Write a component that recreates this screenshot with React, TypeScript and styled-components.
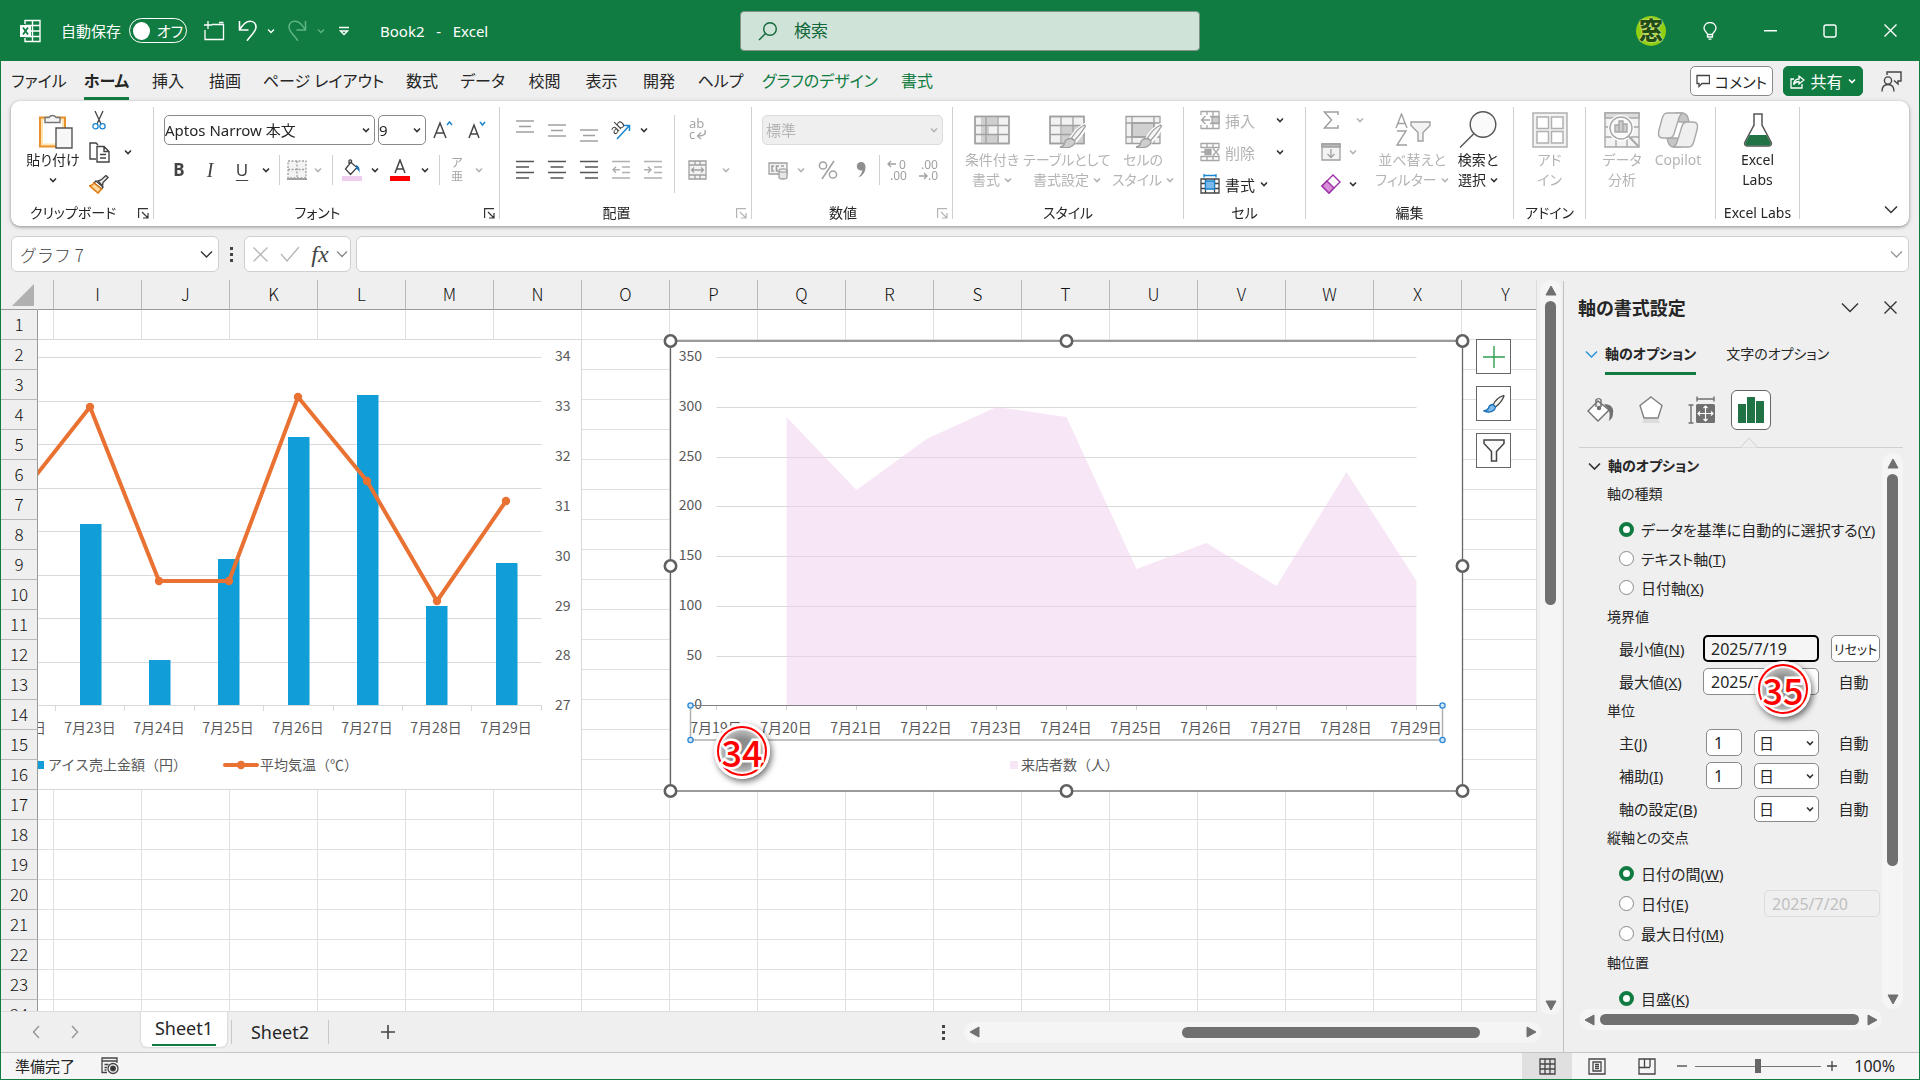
import React from "react";
import styled, { createGlobalStyle, css } from "styled-components";

const GREEN = "#107c41";
const UI = `"Noto Sans", "Noto Sans CJK JP", sans-serif`;
const SHEET = `"Noto Sans CJK JP", "Noto Sans", sans-serif`;
const INK = "#262626";
const DIM = "#b4b4b4";
const LINE = "#8a8a8a";

const GlobalStyle = createGlobalStyle`
  *, *::before, *::after { box-sizing: border-box; }
  body { margin: 0; background: #efefef; color: ${INK}; font-family: ${UI}; font-feature-settings: "palt"; font-size: 15px; }
  button, input, select { font: inherit; color: inherit; font-feature-settings: inherit; margin: 0; }
  button { border: 0; background: none; padding: 0; }
  svg { display: block; flex: none; }
`;

const Window = styled.div`
  display: flex; flex-direction: column; height: 100vh; min-height: 640px; overflow: hidden;
  background: #efefef; border: 1px solid ${GREEN}; border-top: 0;
`;

/* ---------- shared pieces ---------- */

type IcProps = { w: number; h: number; vb?: string; sw?: number; c?: string; children: React.ReactNode };
const Ic = ({ w, h, vb, sw = 1.3, c = "#444", children }: IcProps) => (
  <svg width={w} height={h} viewBox={vb ?? `0 0 ${w} ${h}`} fill="none" stroke={c} strokeWidth={sw} aria-hidden="true">{children}</svg>
);
const Chevron = ({ c = "#333", w = 8, sw = 1.6 }: { c?: string; w?: number; sw?: number }) => (
  <Ic w={w + 2} h={w / 2 + 3} vb={`0 0 ${w + 2} ${w / 2 + 3}`} c={c} sw={sw}><path d={`M1 1.5l${w / 2} ${w / 2} ${w / 2}-${w / 2}`} /></Ic>
);
const Cross = ({ c = "#333", s = 13 }: { c?: string; s?: number }) => (
  <Ic w={s} h={s} c={c} sw={1.4}><path d={`M.5.5L${s - 0.5} ${s - 0.5}M${s - 0.5}.5L.5 ${s - 0.5}`} /></Ic>
);

const ToolButton = styled.button<{ $w?: number; $h?: number }>`
  display: inline-flex; align-items: center; justify-content: center; flex: none;
  width: ${(p) => p.$w ?? 32}px; height: ${(p) => p.$h ?? 30}px;
`;

const PickerWrap = styled.span<{ $w: number; $h: number }>`
  display: inline-grid; align-items: center; width: ${(p) => p.$w}px; height: ${(p) => p.$h}px; flex: none;
  > * { grid-area: 1 / 1; }
  > svg { justify-self: end; margin-right: 5px; pointer-events: none; }
`;
const PickerSelect = styled.select<{ $pad: number }>`
  appearance: none; width: 100%; height: 100%; padding: 0 16px 0 ${(p) => p.$pad}px; font-size: 15px;
  border: 1px solid ${LINE}; border-radius: 5px; background: #fff; opacity: 1;
  &:disabled { background: #efefef; border-color: #dcdcdc; color: ${DIM}; }
`;
const Picker = ({ label, value, w, h, pad = 3, disabled }: { label: string; value: string; w: number; h: number; pad?: number; disabled?: boolean }) => (
  <PickerWrap $w={w} $h={h}>
    <PickerSelect aria-label={label} $pad={pad} disabled={disabled}><option>{value}</option></PickerSelect>
    <Chevron c={disabled ? DIM : "#333"} w={6} />
  </PickerWrap>
);

/* ---------- title bar ---------- */

const TitleBar = styled.header`
  display: grid; grid-template-columns: 1fr 460px 1fr; align-items: center; flex: none; height: 61px;
  margin: 0 -1px; padding-left: 20px; background: ${GREEN}; color: #fff;
`;
const TitleLeft = styled.div`display: flex; align-items: center;`;
const AutoSave = styled.label`display: flex; align-items: center; gap: 8px; margin-left: 20px; white-space: nowrap;`;
const Toggle = styled.span`
  display: inline-flex; align-items: center; gap: 7px; width: 58px; height: 25px; padding: 0 3px; border: 1px solid #fff; border-radius: 13px;
  input { appearance: none; width: 18px; height: 18px; border-radius: 50%; background: #fff; margin: 0; }
`;
const QuickTools = styled.div`display: flex; align-items: center; margin-left: 10px;`;
const DocName = styled.h1`margin: 0 0 0 17px; font-size: 15px; font-weight: 400; white-space: pre;`;
const SearchBox = styled.label`
  display: flex; align-items: center; gap: 16px; height: 40px; padding: 0 17px; border: 1px solid #7f9488; border-radius: 4px; background: #cfe3d8; color: #12683a;
  input { flex: 1; min-width: 0; border: 0; background: none; outline: 0; padding: 0; font-size: 17px; }
  input::placeholder { color: #12683a; opacity: 1; }
`;
const TitleRight = styled.div`display: flex; align-items: center; justify-content: flex-end;`;
const Avatar = styled.button`
  width: 30px; height: 30px; border-radius: 50%; margin-right: 14px; background: #8fce10; color: #1f4d12;
  font-size: 24px; line-height: 28px; font-weight: 900; text-shadow: 0 0 1px #f4f8c8, 0 0 2px #f4f8c8;
  display: flex; justify-content: center;
`;

const ExcelLogo = () => (
  <Ic w={21} h={24} c="#fff" sw={1.4}>
    <path d="M5 5V1.5h15v21H5V19M5 6.5h15M5 12h15M5 17.5h15M12.5 1.5v21" />
    <path d="M0 6h11v12H0z" fill="#fff" stroke="none" />
    <path d="M3 8.5l5 7M8 8.5l-5 7" stroke={GREEN} strokeWidth={1.8} />
  </Ic>
);

const Title = () => (
  <TitleBar>
    <TitleLeft>
      <ExcelLogo />
      <AutoSave>自動保存<Toggle><input type="checkbox" role="switch" aria-label="自動保存" />オフ</Toggle></AutoSave>
      <QuickTools>
        <ToolButton $w={34} aria-label="新規">
          <Ic w={22} h={20} c="#fff" sw={1.3}><path d="M9 3.5h11.5v15H2V9M5 0v8M1 4h8M16 1.5h4.5" /></Ic>
        </ToolButton>
        <ToolButton $w={34} aria-label="元に戻す"><Ic w={20} h={22} c="#fff" sw={1.6}><path d="M1.5 1v9h9M1.8 9.7C5 4 8 1.2 12 1.2c4 0 6 3 6 6 0 4-4 7-9 13.5" /></Ic></ToolButton>
        <ToolButton $w={12} aria-label="元に戻すの履歴"><Chevron c="#fff" w={6} sw={1.3} /></ToolButton>
        <ToolButton $w={40} aria-label="やり直し"><Ic w={20} h={22} c="#5fb486" sw={1.5}><path d="M18.5 1v9h-9M18.2 9.7C15 4 12 1.2 8 1.2c-4 0-6 3-6 6 0 4 4 7 9 13.5" /></Ic></ToolButton>
        <ToolButton $w={8} aria-label="やり直しの履歴"><Chevron c="#5fb486" w={6} sw={1.3} /></ToolButton>
        <ToolButton $w={38} aria-label="ユーザー設定"><Ic w={10} h={10} c="#fff" sw={1.3}><path d="M0 1.5h10M1.5 5L5 8.5 8.5 5z" /></Ic></ToolButton>
      </QuickTools>
      <DocName>{"Book2   -   Excel"}</DocName>
    </TitleLeft>
    <SearchBox>
      <Ic w={20} h={20} c="#12683a" sw={1.4}><circle cx="12" cy="8" r="6.3" /><path d="M7.5 12.5L1 19" /></Ic>
      <input type="search" placeholder="検索" aria-label="検索" />
    </SearchBox>
    <TitleRight>
      <Avatar aria-label="アカウント">窓</Avatar>
      <ToolButton $w={60} aria-label="ヒント">
        <Ic w={14} h={18} c="#fff" sw={1.3}><path d="M4.500 12.500c0-2-3.500-3-3.500-6.500a6 5.500 0 0 1 12 0c0 3.500-3.500 4.500-3.500 6.500zM4.500 12.500v2.500h5v-2.500M5.500 17.200h3" /></Ic>
      </ToolButton>
      <ToolButton $w={60} aria-label="最小化"><Ic w={13} h={2} c="#fff" sw={2}><path d="M0 .5h13" /></Ic></ToolButton>
      <ToolButton $w={60} aria-label="最大化"><Ic w={14} h={14} c="#fff" sw={1.4}><rect x="1" y="1" width="12" height="12" rx="2" /></Ic></ToolButton>
      <ToolButton $w={60} aria-label="閉じる"><Cross c="#fff" /></ToolButton>
    </TitleRight>
  </TitleBar>
);

/* ---------- ribbon tabs ---------- */

const TabBar = styled.nav`display: flex; align-items: center; flex: none; height: 40px; padding: 0 10px 0 4px;`;
const RibbonTab = styled.button<{ $w: number; $on?: boolean; $ctx?: boolean }>`
  width: ${(p) => p.$w}px; height: 40px; font-size: 16px; white-space: nowrap; line-height: 36px;
  color: ${(p) => (p.$ctx ? GREEN : INK)}; font-weight: ${(p) => (p.$on ? 700 : 400)};
  span { display: inline-block; height: 37px; border-bottom: ${(p) => (p.$on ? `3px solid ${GREEN}` : "0")}; }
`;
const TabActions = styled.div`display: flex; align-items: center; gap: 10px; margin-left: auto;`;
const ActionButton = styled.button<{ $solid?: boolean }>`
  display: flex; align-items: center; justify-content: center; gap: 5px; height: 30px; width: ${(p) => (p.$solid ? 80 : 83)}px;
  font-size: ${(p) => (p.$solid ? 16 : 15)}px; border-radius: 5px; border: 1px solid ${(p) => (p.$solid ? GREEN : LINE)};
  background: ${(p) => (p.$solid ? GREEN : "#fff")}; color: ${(p) => (p.$solid ? "#fff" : INK)}; white-space: nowrap;
`;
const TABS: [string, number][] = [["ファイル", 68], ["ホーム", 67], ["挿入", 56], ["描画", 58], ["ページ レイアウト", 139], ["数式", 58], ["データ", 63], ["校閲", 61], ["表示", 53], ["開発", 62], ["ヘルプ", 61], ["グラフのデザイン", 138], ["書式", 56]];

const Tabs = () => (
  <TabBar>
    {TABS.map(([t, w], i) => <RibbonTab key={t} $w={w} $on={i === 1} $ctx={i > 10}><span>{t}</span></RibbonTab>)}
    <TabActions>
      <ActionButton><Ic w={14} h={14} sw={1.3}><path d="M1 1.500h12.500v8H6L3 12.500v-3H1z" /></Ic>コメント</ActionButton>
      <ActionButton $solid>
        <Ic w={15} h={15} c="#fff" sw={1.3}><path d="M4 5H1v9h11v-4M3.500 10.500C4 7 6 5 9 5V2l5 4-5 4V7.500c-2.500 0-4 1-5.500 3z" /></Ic>共有<Chevron c="#fff" w={6} />
      </ActionButton>
      <ToolButton $w={36} aria-label="共同作業">
        <Ic w={21} h={21} sw={1.4}><circle cx="7" cy="9.500" r="3.600" /><path d="M1 20.500c0-5 2.500-7 6-7s6 2 6 7M6 4V1h14v9h-3v3l-4-3.500" /></Ic>
      </ToolButton>
    </TabActions>
  </TabBar>
);

/* ---------- ribbon ---------- */

const RibbonPanel = styled.section`
  display: flex; flex: none; height: 125px; margin: 0 10px; padding: 3px 0 7px; overflow: hidden;
  background: #fff; border-radius: 9px; box-shadow: 0 1px 4px rgba(0, 0, 0, .25);
`;
const RibbonShadow = styled.div`flex: none; filter: drop-shadow(0 1px 1px rgba(0, 0, 0, .18));`;
const GroupBox = styled.div<{ $w: number }>`
  display: grid; grid-template-rows: 1fr 12px; grid-template-columns: 1fr 1px; width: ${(p) => p.$w}px; flex: none;
  &::after { content: ""; grid-area: 1 / 2 / 3 / 3; margin-top: 3px; background: #d0d0d0; }
`;
const GroupBody = styled.div<{ $top?: number; $left?: number; $center?: boolean }>`
  display: flex; align-items: flex-start; padding: ${(p) => p.$top ?? 0}px 0 0 ${(p) => p.$left ?? 0}px; min-width: 0;
  justify-content: ${(p) => (p.$center ? "center" : "flex-start")};
`;
const GroupFoot = styled.div`
  display: flex; align-items: center; font-size: 14px; line-height: 12px; white-space: nowrap;
  > span { flex: 1; text-align: center; }
  > button { margin: 0 4px 0 2px; }
`;
const Rows = styled.div`display: flex; flex-direction: column; gap: 10px;`;
const Stack = styled.div`display: flex; flex-direction: column;`;
const Row = styled.div<{ $gap?: number }>`display: flex; align-items: center; gap: ${(p) => p.$gap ?? 0}px;`;
const Sep = styled.span<{ $tall?: boolean }>`width: 1px; height: ${(p) => (p.$tall ? 78 : 30)}px; margin: 0 5px; background: #d0d0d0; flex: none;`;
const BigButton = styled.button<{ $w: number; $dim?: boolean }>`
  display: flex; flex-direction: column; align-items: center; width: ${(p) => p.$w}px; padding-top: 7px; flex: none;
  font-size: 14px; line-height: 20px; white-space: nowrap; color: ${(p) => (p.$dim ? DIM : INK)};
  > i { display: flex; align-items: center; justify-content: center; height: 38px; margin-bottom: 1px; }
  > span { display: flex; align-items: center; gap: 4px; height: 20px; }
`;
const CellButton = styled.button<{ $dim?: boolean; $gap: number }>`
  display: flex; align-items: center; height: 32px; gap: 5px; font-size: 15px; color: ${(p) => (p.$dim ? DIM : INK)};
  > svg:last-child { margin-left: ${(p) => p.$gap}px; }
`;
const Glyph = styled.b<{ $kind?: "bold" | "italic" | "under" }>`
  font-size: 17px; line-height: 22px; font-weight: ${(p) => (p.$kind === "bold" ? 700 : 400)}; color: #444;
  ${(p) => p.$kind === "italic" && css`font-family: "Liberation Serif", serif; font-style: italic; font-size: 20px;`}
  ${(p) => p.$kind === "under" && css`text-decoration: underline; text-underline-offset: 4px;`}
`;
const Ruby = styled.span`display: block; font-size: 12px; line-height: 14px; color: #a6a6a6; text-align: center;`;

const Launcher = ({ dim }: { dim?: boolean }) => (
  <ToolButton $w={12} $h={12} aria-label="ダイアログを開く">
    <Ic w={11} h={11} c={dim ? DIM : "#333"} sw={1.2}><path d="M.6 10V.6H10M4 4l6 6M10 5v5H5" /></Ic>
  </ToolButton>
);
const Group = ({ w, label, launcher, children, top, left, center }: { w: number; label?: string; launcher?: "on" | "dim"; children: React.ReactNode; top?: number; left?: number; center?: boolean }) => (
  <GroupBox $w={w}>
    <GroupBody $top={top} $left={left} $center={center}>{children}</GroupBody>
    <GroupFoot><span>{label}</span>{launcher && <Launcher dim={launcher === "dim"} />}</GroupFoot>
  </GroupBox>
);
const Drop = ({ w = 18, h, dim }: { w?: number; h?: number; dim?: boolean }) => <ToolButton $w={w} $h={h} aria-label="その他"><Chevron c={dim ? DIM : "#333"} w={6} /></ToolButton>;
const Lines = ({ kind, v = 0, c = "#555", n = 4 }: { kind: "l" | "c" | "r"; v?: number; c?: string; n?: number }) => {
  const widths = n === 3 ? [18, 12, 18] : [18, 13, 18, 13];
  return (
    <Ic w={18} h={26} c={c} sw={1.5}>
      {widths.map((len, i) => {
        const x = kind === "l" ? 0 : kind === "c" ? (18 - len) / 2 : 18 - len;
        const y = n === 3 ? 7 + v + i * 5.5 : 4.5 + i * 5.5;
        return <path key={i} d={`M${x} ${y}h${len}`} />;
      })}
    </Ic>
  );
};
const Indent = ({ out }: { out?: boolean }) => (
  <Ic w={18} h={22} c="#b0b0b0" sw={1.5}><path d={`M0 2.500h18M10 8h8M10 13.500h8M0 19h18${out ? "M8 10.800H1M4 7.800l-3 3 3 3" : "M0 10.800h7M4 7.800l3 3-3 3"}`} /></Ic>
);
const TableGlyph = ({ children, shade }: { children?: React.ReactNode; shade?: string }) => (
  <Ic w={38} h={36} c="#a0a0a0" sw={1.3}>
    <path d="M2 4.500h34v27H2z" fill="#f2f2f2" />
    {shade && <path d={shade} fill="#cfcfcf" stroke="none" />}
    <path d="M2 4.500h34v27H2zM2 13.500h34M2 22.500h34M13 4.500v27M25 4.500v27" />
    {children}
  </Ic>
);
const BrushOver = () => (
  <>
    <path d="M37 13c-6 3-11 8-14 14l3.500 2.500C31 25 36 18 37.500 14z" fill="#f5f5f5" stroke="#fff" strokeWidth={4} />
    <path d="M36.500 13c-6 3-10 8-13 13l3 2.500C31 24 35 18 37.500 14z" fill="#f5f5f5" />
    <path d="M23 26.500c-4 0-6 2-6.500 5-.5 2-2 3-4.500 3.500 8 2 15-.5 15-6z" fill="#cfcfcf" />
  </>
);
const CellIcon = ({ kind }: { kind: "in" | "del" | "fmt" }) => {
  const c = kind === "fmt" ? "#444" : "#a6a6a6";
  return (
    <Ic w={20} h={20} c={c} sw={1.3}>
      {kind === "fmt" ? (
        <><path d="M1 5h18v14H1zM1 9.500h18M1 14.500h18M5.500 5v14M14.500 5v14" /><path d="M5.500 7h9v8h-9z" fill="#7db9ea" stroke="#1a86d0" /><path d="M4 1.500h12M4 0v3.500M16 0v3.500" stroke="#1a86d0" /></>
      ) : kind === "in" ? (
        <><path d="M1 1.500h18v17H1zM1 6.500h18M1 13.500h18M7 1.500v17M13 1.500v17" /><path d="M0 5h10v10H0z" fill="#fff" stroke="none" /><path d="M12 7h7v6h-7z" fill="#ccc" /><path d="M10 10H2M5.500 6l-4 4 4 4" /></>
      ) : (
        <><path d="M1 1.500h18v4H1zM1 14.500h18v4H1zM7 1.500v4M13 1.500v4M7 14.500v4M13 14.500v4M1 10h4" /><path d="M5 7.500h6v5H5z" fill="#a6a6a6" /><path d="M13 6.500l6 7M19 6.500l-6 7" /></>
      )}
    </Ic>
  );
};

const CollapseCorner = styled.div`display: flex; flex: 1; align-items: flex-end; justify-content: flex-end; padding-right: 2px;`;

const Ribbon = () => (
  <RibbonShadow>
    <RibbonPanel>
      <Group w={143} label="クリップボード" launcher="on" left={12}>
        <BigButton $w={60}>
          <i><Ic w={40} h={38} vb="-5 0 40 38" sw={1.4}>
            <path d="M2 6.500h25v29H2z" fill="#ffe3b0" stroke="#e8912d" strokeWidth={2} /><path d="M5 9.500h19v23H5z" fill="#fff" stroke="none" />
            <path d="M7 11.500v-5h4a4 4 0 0 1 7 0h4v5z" fill="#f5f5f5" stroke="#777" /><path d="M18 17h16v20H18z" fill="#f7f7f7" stroke="#555" />
          </Ic></i>
          <span>貼り付け</span><span><Chevron w={6} /></span>
        </BigButton>
        <Stack>
          <ToolButton $h={32} aria-label="切り取り"><Ic w={14} h={20}><path d="M3 1l6 13M11 1L5 14" /><circle cx="3.500" cy="16.300" r="2.600" stroke="#1a86d0" /><circle cx="10.500" cy="16.300" r="2.600" stroke="#1a86d0" /></Ic></ToolButton>
          <ToolButton $h={32} aria-label="コピー"><Ic w={21} h={21} sw={1.4}><path d="M7 17H1V1h6l2 2M8 4.500h7l5 5v10.500H8zM15 4.500v5h5M11 12.500h6M11 16h6" fill="none" /></Ic></ToolButton>
          <ToolButton $h={32} aria-label="書式のコピー"><Ic w={20} h={19} sw={1.4}><path d="M9 6l3-1 5-4.500 2 2-5 5-.5 3.500z" fill="#eee" /><path d="M7 6l7 6-1.500 2-7.500-6z" fill="#fff" /><path d="M5 8C4 10 2 10.500.8 10.800L9 18l3.500-4z" fill="#ffd9a0" stroke="#e07a10" strokeWidth={1.6} /></Ic></ToolButton>
        </Stack>
        <Stack><ToolButton $w={26} $h={32} as="span" /><Drop w={26} h={32} /></Stack>
      </Group>

      <Group w={346} label="フォント" launcher="on" top={11} left={10}>
        <Rows>
          <Row>
            <Row $gap={3}><Picker label="フォント名" value="Aptos Narrow 本文" w={211} h={30} pad={0} /><Picker label="フォント サイズ" value="9" w={48} h={30} pad={0} /></Row>
            <ToolButton $w={34} aria-label="拡大"><Ic w={20} h={20} sw={1.5}><path d="M1 18L7 3l6 15M3 13h8" /><path d="M14 5l2.500-3L19 5" stroke="#1a86d0" /></Ic></ToolButton>
            <ToolButton $w={34} aria-label="縮小"><Ic w={18} h={20} sw={1.5}><path d="M1 18L6 5l5 13M3 14h6.500" /><path d="M12 2l2.500 3L17 2" stroke="#1a86d0" /></Ic></ToolButton>
          </Row>
          <Row>
            <ToolButton $w={30} aria-label="太字"><Glyph $kind="bold">B</Glyph></ToolButton>
            <ToolButton aria-label="斜体"><Glyph $kind="italic">I</Glyph></ToolButton>
            <ToolButton aria-label="下線"><Glyph $kind="under">U</Glyph></ToolButton>
            <Drop w={16} /><Sep />
            <ToolButton $w={24} aria-label="罫線"><Ic w={20} h={20} c="#a0a0a0"><path d="M1 1h18v17H1z" fill="#f3f3f3" strokeDasharray="2 1.500" /><path d="M10 1v17M1 9.500h18" strokeDasharray="2 1.500" /><path d="M0 19h20" strokeWidth={1.8} /></Ic></ToolButton>
            <Drop dim /><Sep />
            <ToolButton $w={28} aria-label="塗りつぶし"><Ic w={20} h={22}><path d="M9 3L3.500 10l5 5.500L15 8.500 9.500 4V1.500a1.500 1.500 0 0 0-2.500 0V6" /><path d="M14 6c3 1 4 3 3.500 8-1-3-2-4-3.500-4z" fill="#1a6fb5" stroke="none" /><path d="M0 17h20v5H0z" fill="#efcdee" stroke="none" /></Ic></ToolButton>
            <Drop />
            <ToolButton aria-label="文字色"><Ic w={20} h={22} sw={1.5}><path d="M5 14L10 1l5 13M7 10h6.500" /><path d="M0 17h20v5H0z" fill="#f00" stroke="none" /></Ic></ToolButton>
            <Drop /><Sep />
            <ToolButton $w={24} aria-label="ふりがな"><Ruby>ア<br />亜</Ruby></ToolButton>
            <Drop w={20} dim />
          </Row>
        </Rows>
      </Group>

      <Group w={252} label="配置" launcher="dim" top={11} left={9}>
        <Rows>
          <Row>
            <ToolButton aria-label="上揃え"><Lines kind="c" n={3} v={-3} c="#a0a0a0" /></ToolButton>
            <ToolButton aria-label="上下中央揃え"><Lines kind="c" n={3} v={1} c="#a0a0a0" /></ToolButton>
            <ToolButton aria-label="下揃え"><Lines kind="c" n={3} v={6} c="#a0a0a0" /></ToolButton>
            <ToolButton aria-label="方向">
              <Ic w={22} h={22}><text x="1" y="13" transform="rotate(-45 7 10)" fontSize="13" fill="#444" stroke="none">ab</text><path d="M7 20L19 7M14 6.500h5.500V12" stroke="#1a86d0" strokeWidth={1.5} /></Ic>
            </ToolButton>
            <Drop w={14} />
          </Row>
          <Row>
            <ToolButton aria-label="左揃え"><Lines kind="l" /></ToolButton>
            <ToolButton aria-label="中央揃え"><Lines kind="c" /></ToolButton>
            <ToolButton aria-label="右揃え"><Lines kind="r" /></ToolButton>
            <ToolButton aria-label="インデントを減らす"><Indent out /></ToolButton>
            <ToolButton aria-label="インデントを増やす"><Indent /></ToolButton>
          </Row>
        </Rows>
        <Sep $tall />
        <Rows>
          <ToolButton $w={36} aria-label="折り返し"><Ic w={20} h={24} c="#a6a6a6"><text x="1" y="10" fontSize="13" fill="#a6a6a6" stroke="none">ab</text><text x="1" y="21" fontSize="13" fill="#a6a6a6" stroke="none">c</text><path d="M17 12c1.500 4-1 6-7 6M13 14.500L9.500 18l3.500 3" /></Ic></ToolButton>
          <Row><ToolButton $w={34} aria-label="結合"><Ic w={19} h={20} c="#a0a0a0"><path d="M1 1h17v18H1zM1 5h17M1 15h17M7 1v4M12 1v4M7 15v4M12 15v4" fill="#f3f3f3" /><path d="M4 10h11M6 7.500L3.500 10 6 12.500M13 7.500l2.500 2.500L13 12.500" /></Ic></ToolButton><Drop w={24} dim /></Row>
        </Rows>
      </Group>

      <Group w={201} label="数値" launcher="dim" top={11} left={10}>
        <Rows>
          <Picker label="表示形式" value="標準" w={181} h={30} disabled />
          <Row>
            <ToolButton aria-label="通貨"><Ic w={21} h={19} c="#a0a0a0"><path d="M1 2h18v11H1z" fill="#f3f3f3" /><path d="M6 5H4v5h2M11 5H8.500v5H10M13 5h3" strokeWidth={1.6} /><path d="M11 9.500v7c0 2 8 2 8 0v-7" fill="#e6e6e6" /><ellipse cx="15" cy="9.500" rx="4" ry="1.600" fill="#eee" /></Ic></ToolButton>
            <Drop w={14} dim />
            <ToolButton $w={40} aria-label="パーセント"><Ic w={20} h={20} c="#a0a0a0" sw={1.5}><circle cx="5" cy="5.500" r="3.600" /><circle cx="15" cy="14.500" r="3.600" /><path d="M16 1L4 19" /></Ic></ToolButton>
            <ToolButton $w={26} aria-label="桁区切り"><Ic w={10} h={18}><path d="M5 1a4 4 0 1 0 0 8.500c.8 0 1 0 1.300-.2C6 12 4.500 14.500 2 16.500 7 15 9.500 11 9.500 6 9.500 3 8 1 5 1z" fill="#8f8f8f" stroke="none" /></Ic></ToolButton>
            <Sep />
            <ToolButton $w={26} aria-label="小数点以下を増やす"><Ic w={22} h={24} c="#a0a0a0"><path d="M9 6H1M4 3L1 6l3 3" /><text x="12" y="11" fontSize="12" fill="#a0a0a0" stroke="none">0</text><text x="3" y="22" fontSize="12" fill="#a0a0a0" stroke="none">.00</text></Ic></ToolButton>
            <ToolButton $w={36} aria-label="小数点以下を減らす"><Ic w={22} h={24} c="#a0a0a0"><text x="3" y="11" fontSize="12" fill="#a0a0a0" stroke="none">.00</text><path d="M1 18h8M6 15l3 3-3 3" /><text x="10" y="22" fontSize="12" fill="#a0a0a0" stroke="none">.0</text></Ic></ToolButton>
          </Row>
        </Rows>
      </Group>

      <Group w={231} label="スタイル" center>
        <BigButton $w={72} $dim><i><TableGlyph shade="M8 4.500h16v9h-8v9h10v9H8z" /></i><span>条件付き</span><span>書式<Chevron c={DIM} w={6} /></span></BigButton>
        <BigButton $w={78} $dim><i><TableGlyph shade="M14 13.500h22v18H14z"><BrushOver /></TableGlyph></i><span>テーブルとして</span><span>書式設定<Chevron c={DIM} w={6} /></span></BigButton>
        <BigButton $w={74} $dim>
          <i><Ic w={38} h={36} c="#a0a0a0"><path d="M2 4.500h34v27H2z" fill="#f2f2f2" /><path d="M8 11h22v14H8z" fill="#d0d0d0" /><path d="M2 11h34M2 25h34M8 4.500v27M30 4.500v27" /><BrushOver /></Ic></i>
          <span>セルの</span><span>スタイル<Chevron c={DIM} w={6} /></span>
        </BigButton>
      </Group>

      <Group w={122} label="セル" left={16}>
        <Stack>
          <CellButton $dim $gap={16}><CellIcon kind="in" />挿入<Chevron w={6} /></CellButton>
          <CellButton $dim $gap={16}><CellIcon kind="del" />削除<Chevron w={6} /></CellButton>
          <CellButton $gap={0}><CellIcon kind="fmt" />書式<Chevron w={6} /></CellButton>
        </Stack>
      </Group>

      <Group w={208} label="編集" left={9}>
        <Stack>
          <Row><ToolButton $h={32} aria-label="合計"><Ic w={16} h={18} c="#a0a0a0" sw={1.5}><path d="M15 4V1H1.500l7 8-7 8H15v-3" /></Ic></ToolButton><Drop w={26} h={32} dim /></Row>
          <Row><ToolButton $h={32} aria-label="フィル"><Ic w={20} h={18} c="#a0a0a0"><path d="M1 1h18v16H1z" fill="#f3f3f3" /><path d="M1 1h18v3H1z" fill="#bbb" /><path d="M10 6v8.500M6.500 11l3.500 3.500L13.500 11" /></Ic></ToolButton><Drop w={12} h={32} dim /></Row>
          <Row><ToolButton $h={32} aria-label="クリア"><Ic w={20} h={20} c="#9b30a5" sw={1.4}><path d="M12 1l7 7L8 19l-7-7z" fill="#fff" /><path d="M6 7l7 7-5 5-7-7z" fill="#d88fd8" /></Ic></ToolButton><Drop w={12} h={32} /></Row>
        </Stack>
        <BigButton $w={78} $dim>
          <i><Ic w={37} h={34} c="#a0a0a0" sw={1.4}><path d="M2 15L7.500 1 13 15M4 10.500h7M3 18h9L3 32h10" /><path d="M17 9h19v3.500l-7 7V28h-5v-8.500l-7-7z" fill="#f3f3f3" /></Ic></i>
          <span>並べ替えと</span><span>フィルター<Chevron c={DIM} w={6} /></span>
        </BigButton>
        <BigButton $w={54}>
          <i><Ic w={38} h={38} c="#555" sw={1.4}><circle cx="24" cy="13.500" r="12.800" fill="#fafafa" /><path d="M15 22.500L1 36.500" /></Ic></i>
          <span>検索と</span><span>選択<Chevron w={6} /></span>
        </BigButton>
      </Group>

      <Group w={72} label="アドイン" center>
        <BigButton $w={60} $dim>
          <i><Ic w={36} h={36} c="#b0b0b0" sw={1.5}><path d="M1 1h34v34H1z" fill="#f3f3f3" /><path d="M5 5h11.500v11.500H5zM19.500 5H31v11.500H19.500zM5 19.500h11.500V31H5zM19.500 19.500H31V31H19.500z" fill="#fff" /></Ic></i>
          <span>アド</span><span>イン</span>
        </BigButton>
      </Group>

      <Group w={130} left={10}>
        <BigButton $w={52} $dim>
          <i><Ic w={36} h={36} c="#a8a8a8" sw={1.4}><path d="M1 1h34v34H1z" fill="#f3f3f3" /><path d="M1 1h34v5H1z" fill="#ddd" /><path d="M1 15h34M1 25h34M12 25v10M23 25v10" /><circle cx="17" cy="16" r="11" fill="#fafafa" stroke="#fff" strokeWidth={4} /><circle cx="17" cy="16" r="11" fill="#fafafa" /><path d="M24.500 24L35 35" strokeWidth={2} /><path d="M11 13h4v7h-4zM15 9h4v11h-4zM19 12h4v8h-4z" fill="#ccc" /></Ic></i>
          <span>データ</span><span>分析</span>
        </BigButton>
        <BigButton $w={60} $dim>
          <i><Ic w={42} h={38} c="#a8a8a8" sw={1.4}>
            <path d="M24 2c4 0 6 1 7 5l1 4H22l-3-9z" fill="#c6c6c6" /><path d="M17 36c-4 0-5-2-6-5l-1-4h10l4 9z" fill="#c6c6c6" />
            <path d="M10 2h16c-3 1-4 4-5 8l-4 13c-1 3-2 4-5 4H6c-5 0-5-4-4-8l3-11C6 4 7 2 10 2z" fill="#efefef" />
            <path d="M32 36H16c3-1 4-4 5-8l4-13c1-3 2-4 5-4h6c5 0 5 4 4 8l-3 11c-1 4-2 6-5 6z" fill="#efefef" />
          </Ic></i>
          <span>Copilot</span>
        </BigButton>
      </Group>

      <Group w={84} label="Excel Labs" center>
        <BigButton $w={70}>
          <i><Ic w={30} h={34} c="#555" sw={1.5}><path d="M11 1h8v11l9 17c1 2 0 4-2 4H4c-2 0-3-2-2-4l9-17z" fill="#fff" /><path d="M6.500 22h17l4 7.500c.8 1.500 0 3-1.500 3H4c-1.500 0-2.300-1.500-1.500-3z" fill="#217346" stroke="none" /></Ic></i>
          <span>Excel</span><span>Labs</span>
        </BigButton>
      </Group>
      <CollapseCorner><ToolButton $h={20} aria-label="リボンを折りたたむ"><Chevron w={12} sw={1.5} /></ToolButton></CollapseCorner>
    </RibbonPanel>
  </RibbonShadow>
);

/* ---------- formula bar ---------- */

const FormulaBar = styled.div`display: flex; flex: none; height: 54px; padding: 10px 10px 8px; color: #444;`;
const BarBox = styled.div<{ $w?: number }>`
  display: flex; align-items: center; height: 36px; background: #fff; border: 1px solid #cfcfcf; border-radius: 6px;
  ${(p) => (p.$w ? css`width: ${p.$w}px; flex: none;` : css`flex: 1; min-width: 0;`)}
  input { flex: 1; min-width: 0; height: 32px; border: 0; outline: 0; background: none; padding: 0 8px; font-family: ${SHEET}; font-size: 17px; font-weight: 300; font-feature-settings: normal; }
`;
const Dots = styled.span`display: flex; flex-direction: column; align-items: center; justify-content: center; gap: 3px; width: 25px; i { width: 3px; height: 3px; background: #444; }`;
const Fx = styled.em`font-family: "Liberation Serif", serif; font-size: 24px; line-height: 24px;`;
const Spacer = styled.span`width: 5px;`;

const Formula = () => (
  <FormulaBar>
    <BarBox $w={208}><input aria-label="名前ボックス" defaultValue="グラフ 7" /><ToolButton $w={24} aria-label="名前の一覧"><Chevron w={11} sw={1.4} /></ToolButton></BarBox>
    <Dots><i /><i /><i /></Dots>
    <BarBox $w={107}>
      <ToolButton $w={30} aria-label="キャンセル"><Cross c="#b8b8b8" s={15} /></ToolButton>
      <ToolButton $w={30} aria-label="入力"><Ic w={20} h={16} c="#b8b8b8" sw={1.4}><path d="M1 8l6 7L19 1" /></Ic></ToolButton>
      <ToolButton $w={30} aria-label="関数の挿入"><Fx>fx</Fx></ToolButton>
      <ToolButton $w={14} aria-label="関数の一覧"><Chevron c="#888" w={10} sw={1.3} /></ToolButton>
    </BarBox>
    <Spacer />
    <BarBox><input aria-label="数式バー" /><ToolButton $w={24} aria-label="数式バーの展開"><Chevron c="#999" w={11} sw={1.4} /></ToolButton></BarBox>
  </FormulaBar>
);

/* ---------- scroll bars ---------- */

const Track = styled.div<{ $v?: boolean }>`
  display: flex; flex-direction: ${(p) => (p.$v ? "column" : "row")}; align-items: center; background: #f5f5f5; border-radius: 11px; flex: 1; min-height: 0; min-width: 0;
  ${(p) => (p.$v ? css`width: 21px;` : css`height: 21px;`)}
`;
const Thumb = styled.span<{ $v?: boolean; $grow: number }>`
  flex: ${(p) => p.$grow} 1 0; border-radius: 6px; background: #707070; ${(p) => (p.$v ? css`width: 11px;` : css`height: 11px;`)}
`;
const Rest = styled.span<{ $grow: number }>`flex: ${(p) => p.$grow} 1 0;`;
const ARROWS = { up: "M6 1l5 9H1z", down: "M6 11L1 2h10z", left: "M1 6l9-5v10z", right: "M11 6L2 1v10z" };
const Arrow = ({ dir }: { dir: keyof typeof ARROWS }) => (
  <ToolButton $w={21} $h={21} aria-label={dir}><svg width="12" height="12" viewBox="0 0 12 12"><path d={ARROWS[dir]} fill="#707070" stroke="#707070" strokeLinejoin="round" /></svg></ToolButton>
);
const ScrollBar = ({ v, before, thumb, after }: { v?: boolean; before: number; thumb: number; after: number }) => (
  <Track $v={v}><Arrow dir={v ? "up" : "left"} /><Rest $grow={before} /><Thumb $v={v} $grow={thumb} /><Rest $grow={after} /><Arrow dir={v ? "down" : "right"} /></Track>
);

/* ---------- work sheet ---------- */

const Main = styled.main`display: flex; flex: 1; min-height: 0;`;
const SheetArea = styled.section`display: flex; flex-direction: column; flex: 1; min-width: 0;`;
const GridRow = styled.div`display: flex; flex: 1; min-height: 0;`;
const Canvas = styled.div`position: relative; flex: 1; min-width: 0; overflow: hidden; border-bottom: 1px solid #dcdcdc; border-right: 1px solid #dcdcdc; background: #fff;`;
const VScrollCol = styled.div`display: flex; width: 26px; padding: 0 2px 0 3px; margin-bottom: -3px; z-index: 1;`;
const Grid = styled.table`
  table-layout: fixed; border-collapse: separate; border-spacing: 0; width: 1549px; font-family: ${SHEET}; font-size: 17px;
  th, td { padding: 0 0 2px; height: 30px; line-height: 26px; font-weight: 300; color: #111; }
  td { border-right: 1px solid #e0e0e0; border-bottom: 1px solid #e0e0e0; }
  thead th { background: #efefef; border-right: 1px solid #b9b9b9; border-bottom: 1px solid #999; }
  thead th:first-child { border-right-color: #efefef; }
  tbody th { background: #efefef; border-right: 1px solid #999; border-bottom: 1px solid #b9b9b9; }
  thead svg { margin: 2px 0 0 11px; }
`;
const COLS = "IJKLMNOPQRSTUVWXY".split("");
const SheetGrid = () => (
  <Grid>
    <colgroup><col style={{ width: 37 }} /><col style={{ width: 16 }} />{COLS.map((c) => <col key={c} style={{ width: 88 }} />)}</colgroup>
    <thead><tr>
      <th aria-label="すべて選択"><svg width="22" height="22" viewBox="0 0 22 22"><path d="M22 0v22H0z" fill="#b0b0b0" /></svg></th>
      <th />{COLS.map((c) => <th key={c} scope="col">{c}</th>)}
    </tr></thead>
    <tbody>
      {Array.from({ length: 24 }, (_, r) => (
        <tr key={r}><th scope="row">{r + 1}</th><td />{COLS.map((c) => <td key={c} />)}</tr>
      ))}
    </tbody>
  </Grid>
);

const Floating = styled.svg<{ $x: number; $y: number }>`
  position: absolute; left: ${(p) => p.$x}px; top: ${(p) => p.$y}px; font-family: ${SHEET}; font-size: 14px; font-feature-settings: normal;
  text { fill: #595959; }
`;

const BARS = [[80, 524], [149, 660], [218, 559], [288, 437], [357, 395], [426, 606], [496, 563]];
const TEMPS = [[30, 483], [90, 407], [159, 581], [229, 581], [298, 397], [367, 481], [437, 601], [506, 501]];
const ComboChart = () => (
  <Floating $x={37} $y={59} width="544" height="451" viewBox="38 339 544 451" role="img" aria-label="アイス売上金額と平均気温">
    <rect x="30" y="339.500" width="551.500" height="450" fill="#fff" stroke="#d9d9d9" />
    {Array.from({ length: 9 }, (_, i) => <path key={i} d={`M38 ${Math.round(357 + i * 43.5) + 0.5}H541.500`} stroke="#d9d9d9" />)}
    {Array.from({ length: 8 }, (_, i) => <path key={i} d={`M${Math.round(55 + i * 69.4) + 0.5} 705v6`} stroke="#d9d9d9" />)}
    {BARS.map(([x, y]) => <rect key={x} x={x} y={y} width="21.500" height={705 - y} fill="#119dd7" />)}
    <polyline points={TEMPS.map((p) => p.join()).join(" ")} fill="none" stroke="#e97132" strokeWidth="4" strokeLinejoin="round" />
    {TEMPS.map(([x, y]) => <circle key={x} cx={x} cy={y} r="4.200" fill="#e97132" />)}
    {Array.from({ length: 8 }, (_, i) => <text key={i} x="555" y={361 + Math.round(i * 49.9)}>{34 - i}</text>)}
    <text x="46" y="733" textAnchor="end">日</text>
    {BARS.map(([x], i) => <text key={x} x={x + 10} y="733" textAnchor="middle">{`7月${23 + i}日`}</text>)}
    <rect x="38" y="761" width="6" height="8" fill="#119dd7" />
    <text x="48" y="770">アイス売上金額（円）</text>
    <path d="M225 765h32" stroke="#e97132" strokeWidth="4" strokeLinecap="round" /><circle cx="241" cy="765" r="4.200" fill="#e97132" />
    <text x="260" y="770">平均気温（℃）</text>
  </Floating>
);

const VISITORS = [417, 490, 439, 407, 417, 569, 543, 586, 472, 581];
const AREA = `M786.5 705.5L${VISITORS.map((y, i) => `${786.5 + i * 70} ${y}`).join("L")}L1416.5 705.5z`;
const AreaChart = () => (
  <Floating $x={659} $y={50} width="820" height="470" viewBox="660 330 820 470" role="img" aria-label="来店者数">
    <rect x="670.500" y="341" width="792" height="450" fill="#fff" stroke="#666" strokeWidth="1.300" />
    {Array.from({ length: 8 }, (_, i) => <path key={i} d={`M716.500 ${Math.round(357 + i * 49.75) + 0.5}h700`} stroke="#d9d9d9" />)}
    {Array.from({ length: 11 }, (_, i) => <path key={i} d={`M${716.5 + i * 70} 705v5`} stroke="#d0d0d0" />)}
    <path d={AREA} fill="#efcfee" fillOpacity=".5" />
    {Array.from({ length: 8 }, (_, i) => <text key={i} x="702" y={361 + Math.round(i * 49.75)} textAnchor="end">{350 - i * 50}</text>)}
    {Array.from({ length: 11 }, (_, i) => <text key={i} x={716 + i * 70} y="733" textAnchor="middle">{`7月${19 + i}日`}</text>)}
    <path d="M690.500 705.500V740H1442.500V705.500" fill="none" stroke="#b0b0b0" strokeWidth="1.500" /><path d="M690.500 705.500H1442.500" stroke="#808080" />
    {[690.5, 1442.5].map((x) => [705.5, 740].map((y) => <circle key={`${x}-${y}`} cx={x} cy={y} r="2.600" fill="#cfe6f8" stroke="#2b88d8" strokeWidth="1.300" />))}
    <rect x="1010" y="761" width="8" height="8" fill="#f6e6f6" />
    <text x="1021" y="770">来店者数（人）</text>
    {[670.5, 1066.5, 1462.5].map((x) => [341, 566, 791].map((y) => (x === 1066.5 && y === 566 ? null : <circle key={`${x}-${y}`} cx={x} cy={y} r="5.700" fill="#fff" stroke="#606060" strokeWidth="2.600" />)))}
  </Floating>
);

const ChartTools = styled.div`position: absolute; left: 1475px; top: 59px; display: flex; flex-direction: column; gap: 12px;`;
const ChartTool = styled.button`display: flex; align-items: center; justify-content: center; width: 35px; height: 35px; background: #fff; border: 1px solid #666;`;

const Badge = styled.span<{ $x: number; $y: number }>`
  position: absolute; left: ${(p) => p.$x}px; top: ${(p) => p.$y}px; z-index: 2; width: 56px; height: 56px; border-radius: 50%;
  display: flex; align-items: center; justify-content: center; background: radial-gradient(circle, #8c8c8c 0 12px, #b8b8b8 20px, #fff 22px);
  box-shadow: 2px 3px 6px rgba(0, 0, 0, .55); color: #f00; font-family: "Noto Sans CJK JP", sans-serif; font-size: 36px; line-height: 50px; font-weight: 500;
  &::before { content: ""; position: absolute; inset: 3px; border: 2px solid #f00; border-radius: 50%; }
  span { position: relative; -webkit-text-stroke: 5px #fff; paint-order: stroke fill; }
`;

/* ---------- sheet tabs ---------- */

const SheetBar = styled.div`display: flex; align-items: center; flex: none; height: 40px; padding: 0 22px 0 19px; font-size: 18px;`;
const SheetTab = styled.button<{ $on?: boolean }>`
  align-self: flex-start; height: 36px; width: 86px; border-radius: 0 0 6px 6px; line-height: 30px;
  ${(p) => p.$on ? css`background: #fff; margin-top: -1px; margin-left: 43px; box-shadow: 0 0 2px rgba(0, 0, 0, .3);` : css`width: 96px; margin: 2px 0 0 4px; line-height: 36px;`}
  span { display: inline-block; padding: 0 3px; height: 33px; border-bottom: ${(p) => (p.$on ? `2px solid ${GREEN}` : "0")}; }
`;
const Rule = styled.i`width: 1px; height: 24px; background: #c8c8c8;`;
const FirstRule = styled(Rule)`margin-left: 4px; margin-right: -4px;`;
const HScroll = styled.div`display: flex; width: 577px; margin-left: 8px;`;
const PushRight = styled.div`display: flex; margin-left: auto; align-items: center;`;

const SheetTabs = () => (
  <SheetBar>
    <ToolButton aria-label="前のシート"><Ic w={8} h={14} c="#999" sw={1.5}><path d="M7 1L1.500 7 7 13" /></Ic></ToolButton>
    <ToolButton $w={46} aria-label="次のシート"><Ic w={8} h={14} c="#999" sw={1.5}><path d="M1 1l5.500 6L1 13" /></Ic></ToolButton>
    <SheetTab $on><span>Sheet1</span></SheetTab><FirstRule /><SheetTab><span>Sheet2</span></SheetTab><Rule />
    <ToolButton $w={118} aria-label="新しいシート"><Ic w={14} h={14} sw={1.6}><path d="M7 0v14M0 7h14" /></Ic></ToolButton>
    <PushRight><Dots><i /><i /><i /></Dots><HScroll><ScrollBar before={197} thumb={297} after={40} /></HScroll></PushRight>
  </SheetBar>
);

/* ---------- format pane ---------- */

const Pane = styled.aside`display: flex; flex-direction: column; flex: none; width: 356px; position: relative; border-left: 1px solid #c0c0c0; padding-bottom: 22px; margin-top: 1px;`;
const PaneHead = styled.div`display: flex; align-items: center; height: 53px; padding: 0 9px 0 14px; flex: none; h2 { margin: 0 auto 0 0; font-size: 18px; line-height: 24px; }`;
const PaneTabs = styled.div`display: flex; height: 41px; flex: none; padding-left: 14px;`;
const PaneTab = styled.button<{ $on?: boolean }>`
  height: 41px; line-height: 40px; font-size: 14px; white-space: nowrap; font-weight: ${(p) => (p.$on ? 700 : 400)};
  border-bottom: ${(p) => (p.$on ? `3px solid ${GREEN}` : "3px solid transparent")}; margin-right: 30px;
`;
const PaneIcons = styled.div`display: flex; align-items: center; flex: none; height: 40px; margin: 15px 0 17px 12px;`;
const IconTab = styled.button<{ $on?: boolean; $w?: number }>`
  display: flex; align-items: center; justify-content: center; height: 40px; width: ${(p) => p.$w ?? 50}px;
  ${(p) => p.$on && css`background: #fff; border: 1px solid #666; border-radius: 6px; margin-left: 5px;`}
`;
const Notch = styled.div`position: relative; height: 1px; flex: none; margin: 0 16px 0 15px; background: #cfcfcf; svg { position: absolute; left: 161px; top: -10px; }`;
const PaneMid = styled.div`display: flex; flex: 1; min-height: 0; margin: 0 16px 0 15px;`;
const PaneBody = styled.form`flex: 1; min-width: 0; overflow: hidden; padding-top: 3px;`;
const PaneV = styled.div`display: flex; width: 21px; padding-top: 5px; flex: none;`;
const PaneH = styled.div`display: flex; flex: none; height: 21px; margin: 0 37px 0 15px;`;
const SectionHead = styled.button`display: flex; align-items: center; gap: 7px; height: 30px; padding-left: 9px; font-size: 14px; line-height: 28px; font-weight: 700;`;
const SubHead = styled.h3`margin: 0; height: 28px; line-height: 26px; padding-left: 28px; font-size: 14px; font-weight: 400;`;
const Radios = styled.div`padding: 6px 0 2px;`;
const RadioRow = styled.div`display: flex; align-items: center; min-height: 29px; padding-left: 40px; gap: 7px; label { white-space: nowrap; line-height: 20px; } `;
const Radio = styled.input`
  appearance: none; width: 15px; height: 15px; flex: none; border-radius: 50%; border: 1px solid ${LINE}; background: #fff;
  &:checked { border: 4px solid ${GREEN}; }
`;
const FieldRow = styled.div`display: grid; grid-template-columns: 127px 48px 65px 12px 49px; align-items: center; height: 33px; label { padding-left: 40px; white-space: nowrap; }`;
const TextField = styled.input<{ $wide?: boolean; $focus?: boolean }>`
  height: 27px; padding: 0 0 0 7px; min-width: 0; font-size: 16px; border-radius: 5px; background: #fff; border: 1px solid ${LINE};
  ${(p) => p.$wide ? css`grid-column: 2 / 4; margin-left: -3px;` : css`width: 36px;`}
  ${(p) => p.$focus && css`border: 2px solid #000; background: #f5f5f5; padding-left: 6px;`}
`;
const Auto = styled.span`grid-column: 5; text-align: center; padding-right: 4px;`;
const ResetButton = styled.button`grid-column: 5; height: 27px; background: #fff; border: 1px solid ${LINE}; border-radius: 5px; font-size: 13px; white-space: nowrap;`;
const DateField = styled.input`margin: 2px 2px 2px auto; width: 116px; height: 27px; padding: 0 7px; border: 1px solid #dcdcdc; border-radius: 5px; background: none; color: #c0c0c0; font-size: 16px;`;

const Opt = ({ id, name, text, k, on, children }: { id: string; name: string; text: string; k: string; on?: boolean; children?: React.ReactNode }) => (
  <RadioRow><Radio type="radio" id={id} name={name} defaultChecked={on} /><label htmlFor={id}>{text}(<u>{k}</u>)</label>{children}</RadioRow>
);
const UnitRow = ({ id, text, k, num }: { id: string; text: string; k: string; num?: boolean }) => (
  <FieldRow>
    <label htmlFor={id}>{text}(<u>{k}</u>)</label>
    {num ? <TextField id={id} defaultValue="1" /> : <span />}
    <Picker label={`${text}の単位`} value="日" w={65} h={26} pad={4} />
    <Auto>自動</Auto>
  </FieldRow>
);

const FormatPane = () => (
  <Pane>
    <PaneHead><h2>軸の書式設定</h2><ToolButton $w={40} aria-label="作業ウィンドウのオプション"><Chevron w={16} sw={1.4} /></ToolButton><ToolButton $w={40} aria-label="閉じる"><Cross /></ToolButton></PaneHead>
    <PaneTabs>
      <ToolButton $w={27} $h={40} aria-label="要素の選択"><Chevron c="#2b95d8" w={11} sw={1.5} /></ToolButton>
      <PaneTab $on>軸のオプション</PaneTab><PaneTab>文字のオプション</PaneTab>
    </PaneTabs>
    <PaneIcons>
      <IconTab aria-label="塗りつぶしと線"><Ic w={28} h={28} c="#707070" sw={1.4}><path d="M11 5L1 15l10 10 11-11zM9 11V4a3 3 0 0 1 5 0v7" fill="#fff" /><circle cx="12" cy="12" r="1.500" fill="#707070" /><path d="M17 8c7 0 10 4 9 9 0 3-1 6-4 8 1-6 1-8-1-12z" fill="#707070" stroke="none" /></Ic></IconTab>
      <IconTab aria-label="効果"><Ic w={24} h={28} c="#808080" sw={1.4}><path d="M12 1l11 8.500-4 12.500H5L1 9.500z" fill="#fff" /><path d="M5 23l-2 4h18l-2-4z" fill="#dcdcdc" stroke="none" /></Ic></IconTab>
      <IconTab aria-label="サイズとプロパティ"><Ic w={27} h={28} c="#707070" sw={1.4}><path d="M9 3h17M9 .5v5M26 .5v5M3 9v18M.5 9h5M.5 27h5" /><rect x="8" y="8" width="19" height="19" rx="1.500" fill="#707070" stroke="none" /><path d="M17.500 10v15M10 17.500h15M15.500 12l2-2 2 2M15.500 23l2 2 2-2M12 15.500l-2 2 2 2M23 15.500l2 2-2 2" stroke="#fff" strokeWidth={1.2} /></Ic></IconTab>
      <IconTab $on $w={40} aria-label="軸のオプション"><Ic w={26} h={26}><path d="M0 7h8v19H0zM9 0h8v26H9zM18 4h8v22h-8z" fill="#217346" stroke="none" /></Ic></IconTab>
    </PaneIcons>
    <Notch><svg width="18" height="11" viewBox="0 0 18 11"><path d="M.5 10.500L9 1l8.500 9.500" fill="#efefef" stroke="#cfcfcf" /></svg></Notch>
    <PaneMid>
      <PaneBody>
        <SectionHead type="button"><Chevron w={11} sw={1.7} />軸のオプション</SectionHead>
        <SubHead>軸の種類</SubHead>
        <Radios>
          <Opt id="t1" name="type" text="データを基準に自動的に選択する" k="Y" on />
          <Opt id="t2" name="type" text="テキスト軸" k="T" />
          <Opt id="t3" name="type" text="日付軸" k="X" />
        </Radios>
        <SubHead>境界値</SubHead>
        <FieldRow><label htmlFor="min">最小値(<u>N</u>)</label><TextField id="min" $wide $focus defaultValue="2025/7/19" /><ResetButton type="button">リセット</ResetButton></FieldRow>
        <FieldRow><label htmlFor="max">最大値(<u>X</u>)</label><TextField id="max" $wide defaultValue="2025/7/29" /><Auto>自動</Auto></FieldRow>
        <SubHead>単位</SubHead>
        <UnitRow id="major" text="主" k="J" num />
        <UnitRow id="minor" text="補助" k="I" num />
        <UnitRow id="base" text="軸の設定" k="B" />
        <SubHead>縦軸との交点</SubHead>
        <Radios>
          <Opt id="c1" name="cross" text="日付の間" k="W" on />
          <Opt id="c2" name="cross" text="日付" k="E"><DateField aria-label="交点の日付" defaultValue="2025/7/20" disabled /></Opt>
          <Opt id="c3" name="cross" text="最大日付" k="M" />
        </Radios>
        <SubHead>軸位置</SubHead>
        <Radios><Opt id="p1" name="pos" text="目盛" k="K" on /></Radios>
      </PaneBody>
      <PaneV><ScrollBar v before={0} thumb={392} after={122} /></PaneV>
    </PaneMid>
    <PaneH><ScrollBar before={0} thumb={259} after={2} /></PaneH>
    <Badge $x={191} $y={380}><span>35</span></Badge>
  </Pane>
);

/* ---------- status bar ---------- */

const StatusBar = styled.footer`display: flex; align-items: center; flex: none; height: 27px; padding: 0 24px 0 14px; background: #f5f5f5; border-top: 1px solid #c6c6c6; font-size: 15px; line-height: 24px;`;
const StatusRight = styled.div`display: flex; align-items: center; margin-left: auto;`;
const ViewButton = styled(ToolButton)<{ $on?: boolean }>`background: ${(p) => (p.$on ? "#e0e0e0" : "none")};`;
const Zoom = styled.input`
  appearance: none; width: 126px; height: 16px; margin: 0 3px; background: linear-gradient(#777, #777) center / 100% 1px no-repeat;
  &::-webkit-slider-thumb { appearance: none; width: 6px; height: 14px; background: #666; }
`;
const Percent = styled.span`width: 55px; text-align: right; font-size: 16px;`;

const Status = () => (
  <StatusBar>
    準備完了
    <ToolButton $w={70} $h={24} aria-label="マクロの記録"><Ic w={18} h={18}><path d="M6 15.500H1V1h15v5M1 4h15" /><path d="M3.500 7.500h4M3.500 10.500h2.500M3.500 13h2" /><circle cx="12" cy="11.500" r="5" fill="#f5f5f5" /><circle cx="12" cy="11.500" r="2.300" fill="#333" /></Ic></ToolButton>
    <StatusRight>
      <ViewButton $on $w={50} $h={26} aria-label="標準"><Ic w={17} h={17}><path d="M1 1h15v15H1zM1 6h15M1 11h15M6 1v15M11 1v15" /></Ic></ViewButton>
      <ViewButton $w={50} $h={26} aria-label="ページ レイアウト"><Ic w={18} h={17}><path d="M1 1h16v15H1zM5 4h8v9H5zM7 6.500h4M7 8.500h4M7 10.500h4" /></Ic></ViewButton>
      <ViewButton $w={50} $h={26} aria-label="改ページ プレビュー"><Ic w={18} h={17}><path d="M1 1h16v15H1zM6.500 1v8M12 1v8M1 9.500h11" /></Ic></ViewButton>
      <ToolButton $w={20} $h={24} aria-label="縮小"><Ic w={10} h={10}><path d="M0 5h10" /></Ic></ToolButton>
      <Zoom type="range" aria-label="ズーム" min={0} max={200} defaultValue={100} />
      <ToolButton $w={16} $h={24} aria-label="拡大"><Ic w={10} h={10}><path d="M0 5h10M5 0v10" /></Ic></ToolButton>
      <Percent>100%</Percent>
    </StatusRight>
  </StatusBar>
);

export default function App() {
  return (
    <>
      <GlobalStyle />
      <Window>
        <Title />
        <Tabs />
        <Ribbon />
        <Formula />
        <Main>
          <SheetArea>
            <GridRow>
              <Canvas>
                <SheetGrid />
                <ComboChart />
                <AreaChart />
                <Badge $x={713} $y={443}><span>34</span></Badge>
                <ChartTools>
                  <ChartTool aria-label="グラフ要素"><Ic w={22} h={22} c="#2e9e4f" sw={1.4}><path d="M11 0v22M0 11h22" /></Ic></ChartTool>
                  <ChartTool aria-label="グラフ スタイル"><Ic w={22} h={20}><path d="M20.500 1.500C16 3 12 6.500 10 11l2.500 2C16.500 10 19.500 6 21 2z" fill="#f5f5f0" /><path d="M10 10.500c-3 0-4 1.500-4.500 3.500-.5 1.500-2 2.500-4.500 2.800 5 2.500 11 1 11.500-4z" fill="#7db9ea" stroke="#1a6fb5" /></Ic></ChartTool>
                  <ChartTool aria-label="グラフ フィルター"><Ic w={22} h={23} sw={1.5}><path d="M1 1h20v3.500l-7.500 8V22h-5v-9.500L1 4.500z" fill="#fafafa" /></Ic></ChartTool>
                </ChartTools>
              </Canvas>
              <VScrollCol><ScrollBar v before={0} thumb={304} after={388} /></VScrollCol>
            </GridRow>
            <SheetTabs />
          </SheetArea>
          <FormatPane />
        </Main>
        <Status />
      </Window>
    </>
  );
}
